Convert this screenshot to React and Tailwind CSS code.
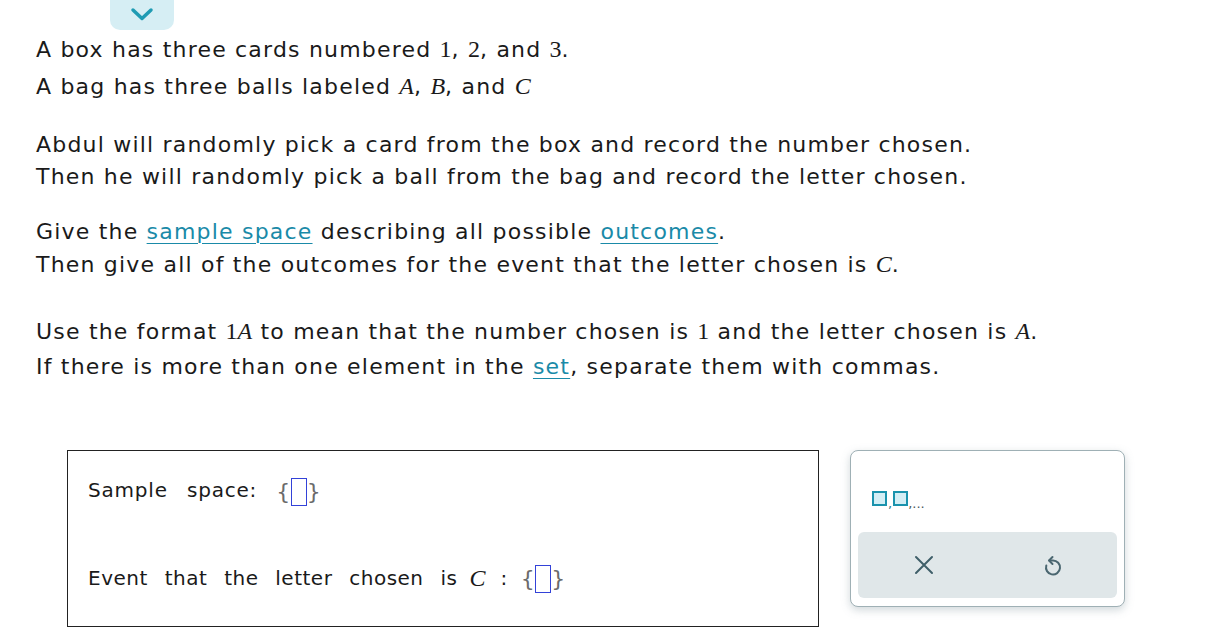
import React from 'react'

const M = ({ children, i }) => (
    <span className={`font-['Liberation_Serif',serif] text-[24px] tracking-normal ${i ? 'italic' : ''}`}>{children}</span>
)

const Link = ({ children }) => (
    <span className="text-[#1a8aa8] underline underline-offset-[4px] decoration-1">{children}</span>
)

function SetInput() {
    return (
        <span className="inline-flex items-center align-middle text-[#6b6b6b] [word-spacing:0]">
            <span className="font-['DejaVu_Sans',sans-serif] text-[22px] leading-none">{'{'}</span>
            <span className="inline-block h-[28px] w-[16px] border-[1.5px] border-[#3342d8]" />
            <span className="font-['DejaVu_Sans',sans-serif] text-[22px] leading-none">{'}'}</span>
        </span>
    )
}

function RedoIcon() {
    return (
        <svg width="18" height="24" viewBox="0 0 18 24" fill="none" stroke="#4a6670" strokeWidth="2" strokeLinecap="round" strokeLinejoin="round">
            <path d="M5.5 7.5 H9 A7 7 0 1 1 2.3 12.5" />
            <path d="M8.5 4 L5 7.5 L8.5 11" />
        </svg>
    )
}

export default function App() {
    return (
        <div className="relative h-[642px] w-[1226px] overflow-hidden bg-white font-['DejaVu_Sans',sans-serif] text-[22px] tracking-[1.2px] text-[#1a1a1a]">
            {/* toggle tab */}
            <div className="ml-[110px] flex h-[30px] w-[64px] items-center justify-center rounded-b-[10px] bg-[#d6eef4]">
                <svg width="26" height="16" viewBox="0 0 26 16" fill="none" stroke="#1f9bb3" strokeWidth="3.5" strokeLinecap="round" strokeLinejoin="round">
                    <path d="M4 3 L13 11.5 L22 3" />
                </svg>
            </div>

            <div className="pl-[36px]">
                <div className="mt-[1px] leading-[37px]">
                    <div>A box has three cards numbered <M>1</M>, <M>2</M>, and <M>3</M>.</div>
                    <div>A bag has three balls labeled <M i>A</M>, <M i>B</M>, and <M i>C</M></div>
                </div>

                <div className="mt-[24px] leading-[32px]">
                    <div>Abdul will randomly pick a card from the box and record the number chosen.</div>
                    <div>Then he will randomly pick a ball from the bag and record the letter chosen.</div>
                </div>

                <div className="mt-[22px] leading-[33px]">
                    <div>Give the <Link>sample space</Link> describing all possible <Link>outcomes</Link>.</div>
                    <div>Then give all of the outcomes for the event that the letter chosen is <M i>C</M>.</div>
                </div>

                <div className="mt-[33px] leading-[35px]">
                    <div>Use the format <M>1</M><M i>A</M> to mean that the number chosen is <M>1</M> and the letter chosen is <M i>A</M>.</div>
                    <div>If there is more than one element in the <Link>set</Link>, separate them with commas.</div>
                </div>
            </div>

            <div className="mt-[66px] flex items-start pl-[67px]">
                {/* answer box */}
                <div className="flex h-[177px] w-[752px] flex-col border-[1.5px] border-[#222] pl-[20px] text-[20px] tracking-[0.5px] [word-spacing:10px]">
                    <div className="mt-[24px] flex items-center">
                        <span className="tracking-[0.8px] [word-spacing:12px]">Sample space:</span>
                        <span className="ml-[19px]"><SetInput /></span>
                    </div>
                    <div className="mt-[54px] flex items-center">
                        <span>Event that the letter chosen is</span>
                        <span className="ml-[12px]"><M i>C</M></span>
                        <span className="ml-[15px]">:</span>
                        <span className="ml-[13px]"><SetInput /></span>
                    </div>
                </div>

                {/* tool panel */}
                <div className="ml-[31px] flex h-[157px] w-[275px] flex-col rounded-[8px] border border-[#9fb0b5] bg-white p-[7px] shadow-[0_3px_8px_rgba(120,140,150,0.35)]">
                    <div className="flex h-[74px] items-center pl-[14px] pt-[6px] tracking-normal">
                        <span className="inline-block h-[15px] w-[15px] border-[2.5px] border-[#1a93ad] bg-[#d3eef5]" />
                        <span className="mt-[10px] mx-[1px] text-[13px] leading-none text-[#2b7b8f]">,</span>
                        <span className="inline-block h-[15px] w-[15px] border-[2.5px] border-[#1a93ad] bg-[#d3eef5]" />
                        <span className="mt-[10px] text-[13px] leading-none text-[#4a5a60]">,...</span>
                    </div>
                    <div className="flex h-[66px] items-center justify-around rounded-[6px] bg-[#e0e7e9]">
                        <svg width="22" height="22" viewBox="0 0 22 22" fill="none" stroke="#3f5f69" strokeWidth="2" strokeLinecap="round">
                            <path d="M3 3 L19 19 M19 3 L3 19" />
                        </svg>
                        <RedoIcon />
                    </div>
                </div>
            </div>
        </div>
    )
}
